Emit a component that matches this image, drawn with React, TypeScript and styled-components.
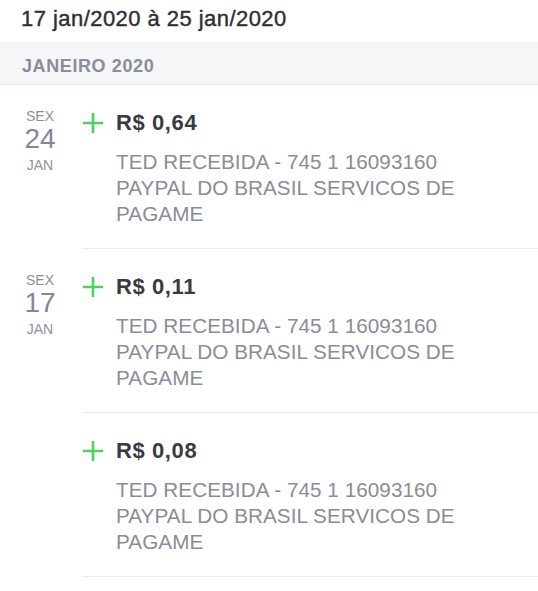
import React from 'react';
import styled, { createGlobalStyle } from 'styled-components';

const GlobalStyle = createGlobalStyle`
    body {
        margin: 0;
        background: #ffffff;
        font-family: "Liberation Sans", Arial, sans-serif;
    }
`;

const Page = styled.div`
    width: 538px;
    min-height: 591px;
    background: #ffffff;
    overflow: hidden;
`;

const PeriodHeader = styled.div`
    height: 38px;
    line-height: 38px;
    padding: 0 0 4px 21px;
    font-size: 22px;
    letter-spacing: 0.45px;
    color: #2e2e33;
    -webkit-text-stroke: 0.4px #2e2e33;
`;

const MonthBar = styled.div`
    height: 36px;
    line-height: 36px;
    padding: 6px 0 0 22px;
    background: #f5f6f8;
    border-bottom: 1px solid #ebecef;
    font-size: 18px;
    font-weight: bold;
    letter-spacing: 0.6px;
    color: #8c8d99;
`;

const Row = styled.div`
    display: flex;
`;

const DateCol = styled.div`
    width: 80px;
    margin-right: 2px;
    padding-top: 23px;
    display: flex;
    flex-direction: column;
    align-items: center;
`;

const DateSmall = styled.div<{ $gap?: number }>`
    font-size: 14px;
    line-height: 16px;
    margin-top: ${p => p.$gap ?? 0}px;
    color: #8f9099;
`;

const DateDay = styled.div`
    font-size: 28px;
    line-height: 30px;
    color: #85869c;
`;

const Content = styled.div`
    flex: 1;
    padding: 24px 0 21px;
    border-bottom: 1px solid #ececee;
`;

const AmountLine = styled.div`
    display: flex;
    align-items: center;
    gap: 12px;
    height: 28px;
`;

const Amount = styled.div`
    font-size: 22px;
    line-height: 28px;
    font-weight: bold;
    letter-spacing: 0.6px;
    color: #3a3a40;
`;

const Description = styled.div`
    margin: 12px 0 0 34px;
    font-size: 20.7px;
    line-height: 26px;
    letter-spacing: 0.05px;
    color: #8b8c97;
    max-width: 360px;
`;

const PlusIcon = () => (
    <svg width="22" height="22" viewBox="0 0 22 22">
        <path d="M11 1 V21 M1 11 H21" stroke="#4fd160" strokeWidth="2.6" fill="none" />
    </svg>
);

type Entry = {
    weekday?: string;
    day?: string;
    month?: string;
    amount: string;
    lines: string[];
};

const entries: Entry[] = [
    { weekday: 'SEX', day: '24', month: 'JAN', amount: 'R$ 0,64', lines: ['TED RECEBIDA - 745 1 16093160', 'PAYPAL DO BRASIL SERVICOS DE', 'PAGAME'] },
    { weekday: 'SEX', day: '17', month: 'JAN', amount: 'R$ 0,11', lines: ['TED RECEBIDA - 745 1 16093160', 'PAYPAL DO BRASIL SERVICOS DE', 'PAGAME'] },
    { amount: 'R$ 0,08', lines: ['TED RECEBIDA - 745 1 16093160', 'PAYPAL DO BRASIL SERVICOS DE', 'PAGAME'] },
];

const EntryRow = ({ entry }: { entry: Entry }) => (
    <Row>
        <DateCol>
            {entry.day && (
                <>
                    <DateSmall>{entry.weekday}</DateSmall>
                    <DateDay>{entry.day}</DateDay>
                    <DateSmall $gap={3}>{entry.month}</DateSmall>
                </>
            )}
        </DateCol>
        <Content>
            <AmountLine>
                <PlusIcon />
                <Amount>{entry.amount}</Amount>
            </AmountLine>
            <Description>
                {entry.lines.map(l => <div key={l}>{l}</div>)}
            </Description>
        </Content>
    </Row>
);

const App = () => (
    <Page>
        <GlobalStyle />
        <PeriodHeader>17 jan/2020 à 25 jan/2020</PeriodHeader>
        <MonthBar>JANEIRO 2020</MonthBar>
        {entries.map((e, i) => <EntryRow key={i} entry={e} />)}
    </Page>
);

export default App;
